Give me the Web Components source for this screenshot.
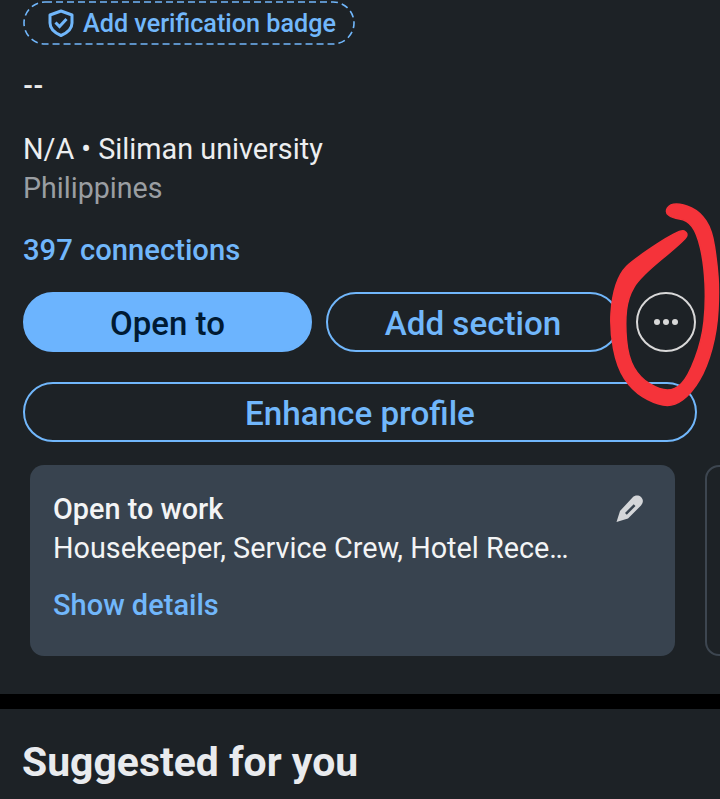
<!DOCTYPE html>
<html>
<head>
<meta charset="utf-8">
<title>Profile</title>
<style>
  html, body { margin: 0; background: #1d2226; }
  body { width: 720px; height: 799px; overflow: hidden; font-family: Roboto, "Liberation Sans", sans-serif; }
</style>
</head>
<body>
<profile-page></profile-page>

<script>
const makeTemplate = html => {
  const template = document.createElement('template')
  template.innerHTML = html
  return template
}

class ShadowElement extends HTMLElement {
  constructor(template) {
    super()
    this.attachShadow({ mode: 'open' })
      .appendChild(template.content.cloneNode(true))
  }
}

const badgeTemplate = makeTemplate(`
  <style>
    :host { display: block; width: 332px; height: 44px; }
    svg.outline { position: absolute; left: 0; top: 0; }
    .wrap { position: relative; height: 100%; display: flex; align-items: center; padding-left: 24px; gap: 8px; box-sizing: border-box; }
    span { font-size: 25.2px; font-weight: 500; color: #71b7fb; white-space: nowrap; }
  </style>
  <div class="wrap">
    <svg class="outline" width="332" height="44">
      <rect x="1" y="1" width="330" height="42" rx="21" fill="none" stroke="#71b7fb" stroke-width="1.6" stroke-dasharray="7 4"/>
    </svg>
    <svg width="28" height="30" viewBox="0 0 28 30">
      <path d="M14 3 L25 7 V15 C25 21 20 25 14 27.5 C8 25 3 21 3 15 V7 Z" fill="none" stroke="#71b7fb" stroke-width="3" stroke-linejoin="round"/>
      <path d="M8.5 14.5 L12.5 18.5 L19.5 11" fill="none" stroke="#71b7fb" stroke-width="3"/>
    </svg>
    <span><slot></slot></span>
  </div>
`)
customElements.define('verification-badge', class extends ShadowElement {
  constructor() { super(badgeTemplate) }
})

const buttonTemplate = makeTemplate(`
  <style>
    :host { display: flex; align-items: center; justify-content: center; box-sizing: border-box; height: 60px; padding-top: 3px; border-radius: 30px; border: 2px solid #71b7fb; color: #71b7fb; font-size: 33.2px; font-weight: 500; white-space: nowrap; }
    :host([primary]) { background: #6cb4fe; border-color: #6cb4fe; color: #001a33; font-size: 33px; }
  </style>
  <slot></slot>
`)
customElements.define('action-button', class extends ShadowElement {
  constructor() { super(buttonTemplate) }
})

const moreTemplate = makeTemplate(`
  <style>
    :host { display: flex; align-items: center; justify-content: center; gap: 3.3px; box-sizing: border-box; width: 60px; height: 60px; border-radius: 50%; border: 2px solid #d8d8d8; flex: none; }
    i { width: 6px; height: 6px; border-radius: 50%; background: #d8d8d8; }
  </style>
  <i></i><i></i><i></i>
`)
customElements.define('more-button', class extends ShadowElement {
  constructor() { super(moreTemplate) }
})

const cardTemplate = makeTemplate(`
  <style>
    :host { display: block; box-sizing: border-box; flex: none; width: 645px; height: 191px; border-radius: 14px; background: #38434f; padding: 26px 23px; position: relative; color: #fff; }
    h3 { margin: 0; font-size: 28.8px; line-height: 36px; font-weight: 500; color: #f3f4f5; }
    p { margin: 3px 0 0; font-size: 28.8px; line-height: 36px; color: #f3f4f5; white-space: nowrap; }
    a { display: block; margin-top: 21px; font-size: 29px; line-height: 36px; font-weight: 500; color: #71b7fb; }
    svg { position: absolute; left: 585px; top: 29px; }
  </style>
  <h3><slot name="title"></slot></h3>
  <p><slot name="body"></slot></p>
  <a><slot name="link"></slot></a>
  <svg width="30" height="30" viewBox="0 0 30 30">
    <path fill-rule="evenodd" fill="#d4d6d9" d="M1.5 28 L5 17 L17.5 3.5 C20 1 23.5 1 26 3 C28.5 5.5 28.5 8.5 26 11.5 L13 24.5 Z M10 19 L11.8 20.8 L20.5 12 L18.7 10.2 Z"/>
  </svg>
`)
customElements.define('open-to-work-card', class extends ShadowElement {
  constructor() { super(cardTemplate) }
})

// hand drawn red ring around the more button, traced from the outline
const ringPoints = [
  [665, 212], [670, 204], [683, 204], [700, 212], [712, 230], [717, 263], [719, 290],
  [717, 330], [707, 367], [692, 393], [673, 407], [653, 403], [632, 390], [617, 367],
  [610, 330], [612, 297], [620, 273], [633, 260], [680, 229], [688, 233], [685, 240],
  [640, 277], [628, 297], [625, 323], [628, 357], [640, 378], [660, 390], [675, 390],
  [688, 377], [702, 340], [706, 303], [704, 263], [697, 233], [687, 220], [672, 218]
]

const ringPath = points => {
  const mid = (a, b) => [(a[0] + b[0]) / 2, (a[1] + b[1]) / 2]
  const last = points[points.length - 1]
  let d = `M${mid(last, points[0]).join(' ')}`
  points.forEach((point, i) => {
    d += ` Q${point.join(' ')} ${mid(point, points[(i + 1) % points.length]).join(' ')}`
  })
  return d + ' Z'
}

const pageTemplate = makeTemplate(`
  <style>
    :host { display: block; position: relative; width: 720px; height: 799px; overflow: hidden; background: #1d2226; font-family: Roboto, "Liberation Sans", sans-serif; }
    .intro { height: 694px; box-sizing: border-box; padding: 1px 24px 0 23px; }
    .dash { height: 30px; margin-top: 26px; color: #e9e9e9; font-size: 26px; line-height: 30px; font-weight: 700; }
    .school { margin: 28px 0 0; font-size: 28.8px; line-height: 40px; color: #eceef0; }
    .place { margin: 0; font-size: 28.6px; line-height: 38px; color: #9a9ea2; }
    .connections { margin: 23px 0 0; font-size: 29.2px; line-height: 40px; font-weight: 500; color: #71b7fb; }
    .actions { display: flex; margin-top: 22px; }
    .actions action-button:nth-child(1) { width: 289px; }
    .actions action-button:nth-child(2) { width: 294px; margin-left: 14px; }
    .actions more-button { margin-left: 16px; }
    .enhance { margin-top: 30px; width: 674px; }
    .cards { display: flex; gap: 30px; margin: 23px 0 0 7px; width: 720px; }
    .next { box-sizing: border-box; flex: none; width: 100px; height: 191px; border: 2px solid #3d4650; border-radius: 14px; }
    .rule { height: 15px; background: #000; }
    h2 { margin: 0; padding: 29px 22px 0; font-size: 40.9px; line-height: 48px; font-weight: 700; color: #e9ebee; }
    .scribble { position: absolute; left: 0; top: 0; pointer-events: none; }
  </style>
  <div class="intro">
    <verification-badge>Add verification badge</verification-badge>
    <div class="dash">--</div>
    <p class="school">N/A • Siliman university</p>
    <p class="place">Philippines</p>
    <p class="connections">397 connections</p>
    <div class="actions">
      <action-button primary>Open to</action-button>
      <action-button>Add section</action-button>
      <more-button></more-button>
    </div>
    <action-button class="enhance">Enhance profile</action-button>
    <div class="cards">
      <open-to-work-card>
        <span slot="title">Open to work</span>
        <span slot="body">Housekeeper, Service Crew, Hotel Rece…</span>
        <span slot="link">Show details</span>
      </open-to-work-card>
      <div class="next"></div>
    </div>
  </div>
  <div class="rule"></div>
  <h2>Suggested for you</h2>
  <svg class="scribble" width="720" height="799">
    <path fill="#f5333a" stroke="#f5333a" stroke-width="1.5" stroke-linejoin="round"/>
  </svg>
`)
customElements.define('profile-page', class extends ShadowElement {
  constructor() {
    super(pageTemplate)
    this.shadowRoot.querySelector('.scribble path').setAttribute('d', ringPath(ringPoints))
  }
})
</script>
</body>
</html>
